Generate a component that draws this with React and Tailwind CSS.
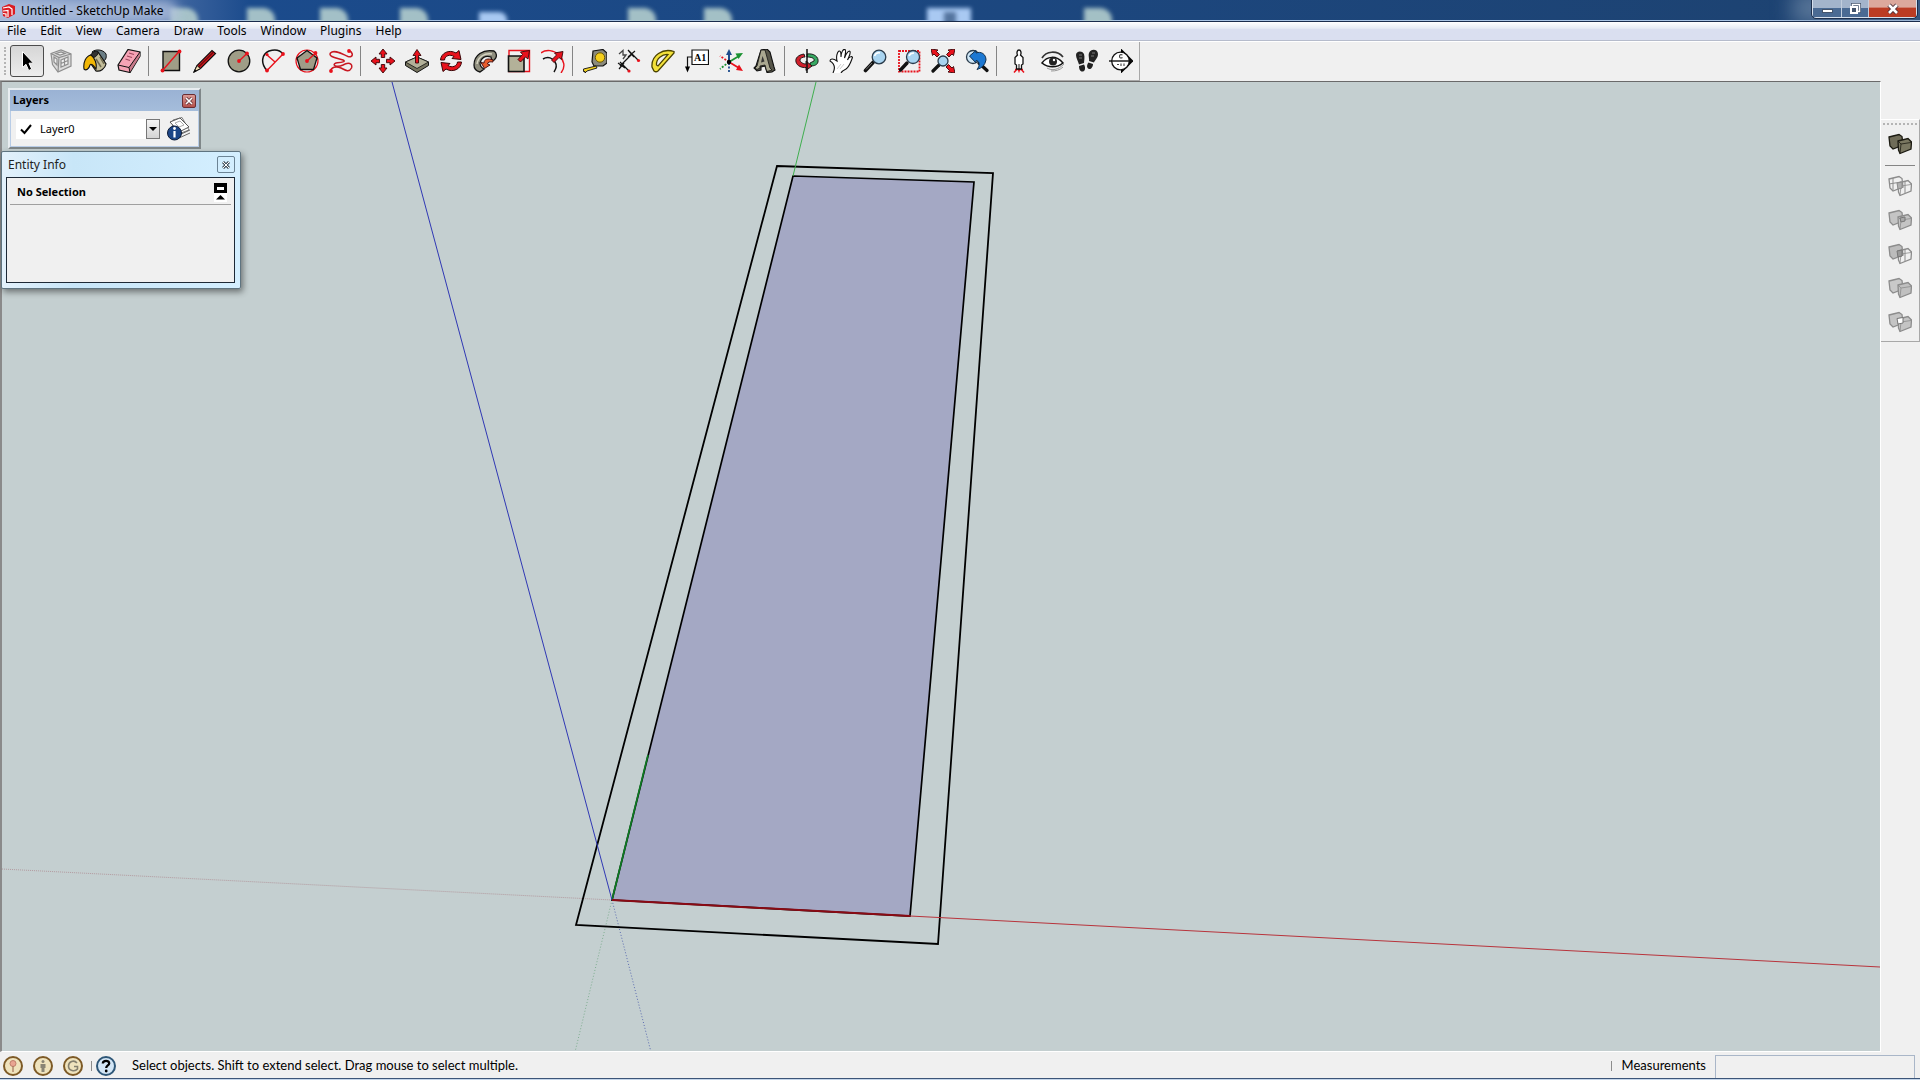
import React, { useState } from 'react';

const INK = '#111111';
const RED = '#e8121c';
const STONE = '#9f9d87';

const Icon = ({ children, className = 'size-6' }) => (
  <svg viewBox="0 0 24 24" className={className} fill="none" aria-hidden="true">
    {children}
  </svg>
);

const SelectIcon = () => (
  <Icon>
    <path d="M7.500 2.500V18.500L11 15.300L13.700 21.500L16.700 20.200L14 14.200H18.500Z" fill="#000" stroke="#fff" strokeWidth="1" />
  </Icon>
);

const ComponentIcon = () => (
  <Icon>
    <path d="M2 4.500L12 1L22 5V17L9 23L3.500 15.500Z" fill="#dcdcdc" stroke="#8e8e8e" strokeWidth="1.200" />
    <path d="M2 4.500L10 8.500L22 5M10 8.500L9 23" stroke="#8e8e8e" strokeWidth="1.200" />
    <path d="M5 8L8 10V16L5 13ZM12 11L19 8V15L12 18ZM7 4.500L12 3L16 4.500L11 6ZM12 14.500L19 11.500M15.500 9.500V16.500" stroke="#8e8e8e" strokeWidth="1.200" fill="#efefef" />
  </Icon>
);

const PaintIcon = () => (
  <Icon>
    <path d="M9 3C12 0 20 0 23 5C24 9 22 12 20 12L12 8Z" fill="#6c7f86" stroke={INK} />
    <path d="M7 7L15 3L23 15C22 20 17 23 13 22L6 12Z" fill="#c3bd9b" stroke={INK} strokeWidth="1.200" />
    <path d="M7 7C9 3 13 1 15 3C16 5 12 9 9 9Z" fill="#333" stroke={INK} />
    <path d="M13 10L18 18M17 8L21 15" stroke="#706b50" strokeWidth="1.500" />
    <path d="M8 6C3 7 0 13 1 20C3 22 6 20 7 16C8 14 10 16 13 20C14 15 12 9 8 6Z" fill="#f2b705" stroke={INK} strokeWidth="1.100" />
  </Icon>
);

const EraserIcon = () => (
  <Icon>
    <path d="M11 0.500L23 3V7L13 23.500L2 21L1 16Z" fill="#f6a3b5" stroke={INK} strokeWidth="1.200" />
    <path d="M12 18.500L23 3V7L13 23Z" fill="#c97a8b" />
    <path d="M1 16L12 18.500L23 3M12 18.500L13 23.500" stroke={INK} strokeWidth="1" />
    <path d="M12 4L17 5.500M10 7L15 8.500M8.500 10L13 11.500" stroke="#a04a60" strokeWidth="1.300" />
  </Icon>
);

const RectangleIcon = () => (
  <Icon>
    <path d="M4 2.500H20.500V21.500H4Z" fill={STONE} stroke={INK} strokeWidth="1.400" />
    <path d="M3.500 21.500L20 2.500" stroke={RED} strokeWidth="1.400" />
    <circle cx="3.500" cy="21.500" r="1.900" fill={RED} />
    <circle cx="20.500" cy="2.500" r="1.900" fill={RED} />
  </Icon>
);

const PencilIcon = () => (
  <Icon>
    <path d="M1 23L4 16.500L19 1.500L22.500 4.500L7.500 19.500Z" fill="#d8141c" stroke={INK} strokeWidth="1.200" />
    <path d="M1 23L4 16.500L7.500 19.500Z" fill="#f3dfb4" stroke={INK} />
    <path d="M5.500 18L20.500 3" stroke="#6c0b0f" strokeWidth="1.200" />
    <path d="M1 23L2 20.500L3.500 22Z" fill="#000" />
  </Icon>
);

const CircleIcon = () => (
  <Icon>
    <circle cx="12" cy="12" r="10.800" fill={STONE} stroke={INK} strokeWidth="1.300" />
    <path d="M12 12L20 4.500" stroke={RED} strokeWidth="1.400" />
    <circle cx="12" cy="12" r="1.900" fill={RED} />
    <circle cx="20" cy="4.500" r="1.900" fill={RED} />
  </Icon>
);

const ArcIcon = () => (
  <Icon>
    <path d="M6 21.500C-1 14 1 5 8 2C14 0 19 1 22 5" stroke={INK} strokeWidth="1.500" />
    <path d="M6 21.500L22 5M6 6L14 13" stroke={RED} strokeWidth="1.400" />
    <circle cx="6" cy="21.500" r="1.900" fill={RED} />
    <circle cx="22" cy="5" r="1.900" fill={RED} />
    <circle cx="6" cy="5.500" r="1.600" fill={RED} />
  </Icon>
);

const PolygonIcon = () => (
  <Icon>
    <circle cx="12" cy="12" r="11" stroke={RED} strokeWidth="1.200" />
    <path d="M12 1.500L22 9L18.500 20.500H5.500L2 9Z" fill={STONE} stroke={INK} strokeWidth="1.300" />
    <path d="M12 12L20 4.500" stroke={RED} strokeWidth="1.400" />
    <circle cx="12" cy="12" r="1.900" fill={RED} />
    <circle cx="20.500" cy="4" r="1.900" fill={RED} />
  </Icon>
);

const FreehandIcon = () => (
  <Icon>
    <path d="M20 1.500C25 4 24 9 19 7.500C13 5 5 0 1.500 4C-1 8 8 9 14 11C18 13 11 13.500 7 14C2 16 8 19 14 16C19 13 24 14 22.500 19C20 24 16 21 12 19C7 17 2 18 1.500 22.500" stroke="#c81822" strokeWidth="1.500" />
    <circle cx="20" cy="2" r="1.900" fill={RED} />
    <circle cx="2" cy="22" r="1.900" fill={RED} />
  </Icon>
);

const MoveIcon = () => (
  <Icon>
    <path d="M12 0L16 5H13.700V8.500H10.300V5H8ZM12 24L16 19H13.700V15.500H10.300V19H8ZM0 12L5 8V10.300H8.500V13.700H5V16ZM24 12L19 8V10.300H15.500V13.700H19V16Z" fill={RED} stroke="#3a0507" strokeWidth="0.900" />
  </Icon>
);

const PushPullIcon = () => (
  <Icon>
    <path d="M0.500 13L12 8L23.500 13V16.500L12 23.500L0.500 16.500Z" fill="#77755f" stroke={INK} />
    <path d="M0.500 13L12 8L23.500 13L12 19.500Z" fill="#b3b199" stroke={INK} strokeWidth="0.800" />
    <path d="M12 0.500L16 6.500H13.500V14H10.500V6.500H8Z" fill={RED} stroke="#3a0507" strokeWidth="0.900" />
  </Icon>
);

const RotateIcon = () => (
  <Icon>
    <path d="M1.500 11C2 4 10 0 17 4L20 1.500L22 10.500L13 9.500L15 7.500C11 5 6 6.500 5.500 11Z" fill={RED} stroke="#3a0507" strokeWidth="1" />
    <path d="M22.500 13C22 20 14 24 7 20L4 22.500L2 13.500L11 14.500L9 16.500C13 19 18 17.500 18.500 13Z" fill={RED} stroke="#3a0507" strokeWidth="1" />
  </Icon>
);

const FollowMeIcon = () => (
  <Icon>
    <path d="M1 16C1 6 10 0 21 2C24 4 24 8 22 10C21 12 18 12 18 8C12 6 8 9 7 14C7 17 9 19 11 20L7 23C3 22 1 19 1 16Z" fill="#8f8e7e" stroke={INK} strokeWidth="1.300" />
    <path d="M4 15C5 8 11 4 19 5" stroke="#d6d4c2" strokeWidth="1.500" />
    <path d="M20 11C15 9 11 10 11 14L8 13.500L11.500 19.500L17 16L14.500 15C14.500 13 17 12.500 20 13Z" fill="#e85c2c" stroke="#3a0507" strokeWidth="0.900" />
  </Icon>
);

const ScaleIcon = () => (
  <Icon>
    <path d="M2 1.500H22.500V22.500H2Z" stroke={RED} strokeWidth="1.400" />
    <path d="M1.500 7H17V22.500H1.500Z" fill="#b3b199" stroke={INK} strokeWidth="1.600" />
    <path d="M22.500 1.500L21 10L18.500 8L13.500 13L11 10.500L15.500 5.500L13.500 3Z" fill={RED} stroke="#3a0507" strokeWidth="0.900" />
  </Icon>
);

const OffsetIcon = () => (
  <Icon>
    <path d="M0 4C5 0 13 1 18 6C23 11 25 18 20 24" stroke={RED} strokeWidth="1.400" />
    <path d="M2 10C7 7 12 9 14 13C16 16 15 20 13 23" stroke={INK} strokeWidth="1.500" />
    <path d="M22 2.500L20.500 10.500L18 8.500L13 13.500L10.500 11L15.500 6L13.500 4Z" fill={RED} stroke="#3a0507" strokeWidth="0.900" />
  </Icon>
);

const TapeIcon = () => (
  <Icon>
    <path d="M10 2L20 0.500L24 4V14L20 17H11L9 13Z" fill="#8b8a7c" stroke={INK} strokeWidth="1.200" />
    <circle cx="17" cy="8.500" r="4.700" fill="#f6cf1c" stroke="#6d5a00" />
    <path d="M13 17L0.500 20V22.500H2V24L4 22L14 19Z" fill="#f4d21f" stroke={INK} strokeWidth="0.900" />
  </Icon>
);

const DimensionIcon = () => (
  <Icon>
    <path d="M3 17L15 5M1 14L8 19M11 1L17 8M3 13L12 22M12 2L21 11M2 20L7 14M11 8L18 2" stroke={INK} strokeWidth="1.200" />
    <path d="M2 5L6 1.500L6 6L9 6L6 10" stroke="#444" strokeWidth="1.300" />
    <circle cx="21.500" cy="11.500" r="1.600" fill={RED} />
    <circle cx="12" cy="22" r="1.600" fill={RED} />
  </Icon>
);

const ProtractorIcon = () => (
  <Icon>
    <path d="M23 2.500C12 -1 0 6 1 18L3 22Q5 23.500 7 22L23 4Z" fill="#f3e13a" stroke="#4a4200" strokeWidth="1.300" />
    <path d="M17 5.500C11 5 5 10 5.500 16L7 17Z" fill="#f0f0f0" stroke="#4a4200" strokeWidth="1.200" />
  </Icon>
);

const TextIcon = () => (
  <Icon>
    <path d="M7 1H23.500V15.500H7Z" fill="#fff" stroke={INK} strokeWidth="1.200" />
    <path d="M7 8H2.500V18" stroke={INK} strokeWidth="1.200" />
    <path d="M0 17.500H5L2.500 23.500Z" fill="#000" />
    <text x="15.200" y="12" textAnchor="middle" fontSize="10" fontWeight="700" fontFamily="'Liberation Serif', serif" fill="#000">A1</text>
  </Icon>
);

const AxesIcon = () => (
  <Icon>
    <path d="M10 13V5" stroke="#1e4c8c" strokeWidth="2" />
    <path d="M10 0L13 6H7Z" fill="#1e4c8c" />
    <path d="M10 13L20 7" stroke="#1a9130" strokeWidth="1.800" />
    <path d="M24 4L16.500 4.500L19.500 10Z" fill="#1a9130" />
    <path d="M10 13L20 19" stroke={RED} strokeWidth="1.800" />
    <path d="M24 22L17 21L20 15.500Z" fill={RED} />
    <path d="M10 14V24" stroke="#1e4c8c" strokeWidth="1.800" strokeDasharray="2 1.500" />
    <path d="M10 13L1 20" stroke="#1a9130" strokeWidth="1.800" strokeDasharray="2 1.500" />
    <path d="M10 13L1 7" stroke={RED} strokeWidth="1.800" strokeDasharray="2 1.500" />
    <circle cx="10" cy="13" r="2.200" fill="#000" />
  </Icon>
);

const SolidTextIcon = () => (
  <Icon>
    <path d="M8 1L14 0L17 3L21 18L22 21L19 23L14 23.500L12 17L8 18L8 21L4 22L1 19L3 17Z" fill="#57564a" stroke={INK} strokeWidth="1.100" />
    <path d="M8 1L12 1L17 19L19 21L14 22.500L13 20L12 16L7 17L7 19L4 20.500L2 19L4 17Z" fill="#aaa891" stroke={INK} strokeWidth="0.800" />
    <path d="M9.500 7L11.500 12.500L8 13.500Z" fill="#333" />
  </Icon>
);

const OrbitIcon = () => (
  <Icon>
    <path d="M12 5C19 4 24 8 23 13C22 17 17 17 15 17L15 14L19 12C20 9 16 8 12 8Z" fill="#37a862" stroke={INK} strokeWidth="0.900" />
    <path d="M9 5C3 6 0 9 1 13C2 17 7 19 11 18.500V21.500L17 17L11 12V15C8 15 5 13 5 11C5 9 8 8 10 8Z" fill="#cf1f2b" stroke={INK} strokeWidth="0.900" />
    <path d="M12 0V24" stroke={INK} strokeWidth="1.500" />
  </Icon>
);

const PanIcon = () => (
  <Icon>
    <path d="M4 24C6 20 6 15 1 12C1 9.500 4 9 8 12C7 8 8 3 10 2C12 1.500 12 5 12 8C12 4 14 -0.500 16 0.500C17.500 2 16 6 15.500 9C17 4 20 1 21 2.500C22 5 19.500 8 18.500 11C20 8 23 6.500 23.500 8.500C22 12 21 17 17 20C15 21 13 22 12 24" fill="#fff" stroke={INK} strokeWidth="1.100" />
    <path d="M8 20L12 15M11 20L15 15" stroke="#ccc" />
  </Icon>
);

const Lens = ({ x, y, r }) => (
  <circle cx={x} cy={y} r={r} fill="#a9d4f0" stroke="#2b3c4c" strokeWidth="1.300" />
);

const ZoomIcon = () => (
  <Icon>
    <path d="M2.500 21.500L10 13.500" stroke={INK} strokeWidth="3.600" strokeLinecap="round" />
    <path d="M3 20.500L9 14" stroke="#777" strokeWidth="1" />
    <Lens x={16} y={8} r={6.8} />
    <path d="M11.500 7C12.500 4.500 15 3.500 17 4" stroke="#fff" strokeWidth="1.500" />
  </Icon>
);

const ZoomWindowIcon = () => (
  <Icon>
    <path d="M2 2H22.500V22.500H2Z" stroke={RED} strokeWidth="1.800" strokeDasharray="2 1" />
    <path d="M3.500 21L10 14" stroke={INK} strokeWidth="3.400" strokeLinecap="round" />
    <Lens x={16} y={8} r={6.5} />
    <path d="M12 7C13 4.500 15 4 17 4" stroke="#fff" strokeWidth="1.500" />
  </Icon>
);

const ZoomExtentsIcon = () => (
  <Icon>
    <path d="M0 0L7 1L5.500 2.500L8.500 5.500L6 8L3 5L1.500 6.500ZM24 0L17 1L18.500 2.500L15.500 5.500L18 8L21 5L22.500 6.500ZM24 24L17 23L18.500 21.500L15 18L17.500 15.500L21 19L22.500 17.500Z" fill={RED} stroke="#3a0507" strokeWidth="0.900" />
    <path d="M2 22L8 16" stroke={INK} strokeWidth="3.200" strokeLinecap="round" />
    <Lens x={12} y={12} r={5} />
  </Icon>
);

const PreviousIcon = () => (
  <Icon>
    <path d="M14 14L22 21.500" stroke={INK} strokeWidth="3.200" strokeLinecap="round" />
    <circle cx="8" cy="8" r="6.500" fill="#cfe6f5" stroke="#2b3c4c" strokeWidth="1.300" />
    <path d="M4.500 7L11 1.500V4C16 2 21 5 21 11C20 16 17 19 12 20.500C15 17 15 12 11 11.500V14Z" fill="#1d78d2" stroke="#12304f" strokeWidth="1" />
  </Icon>
);

const PositionCameraIcon = () => (
  <Icon>
    <path d="M7 23.500L11 19L12 22L13 19L17 23.500M8 20.500H16" stroke={RED} strokeWidth="1.500" />
    <path d="M12 1C14 1 14.500 4 13.500 6L16 8.500V15L14.500 16V20H9.500V16L8 15V8.500L10.500 6C9.500 4 10 1 12 1Z" fill="#fff" stroke={INK} strokeWidth="1.300" />
    <path d="M12 15V20" stroke={INK} />
  </Icon>
);

const LookAroundIcon = () => (
  <Icon>
    <path d="M1 9C5 2 16 1 22 8" stroke="#333" strokeWidth="1.700" />
    <path d="M1 14C6 7 15 6 22 14C16 19 7 19 1 14Z" fill="#fff" stroke={INK} strokeWidth="1.500" />
    <circle cx="12" cy="12.500" r="4" fill="#222" />
    <circle cx="13" cy="11" r="1.200" fill="#fff" />
    <path d="M6 19C11 22 17 21 23 15M10 22C15 22 19 21 22 18" stroke="#999" />
  </Icon>
);

const WalkIcon = () => (
  <Icon>
    <path d="M1 6C1 2 7 1 9 5C10 8 9 12 9 14L4 15.500C3 12 1 9 1 6ZM4 17L9 15.500C11 19 10 22 8 22.500C5 23 4 20 4 17Z" fill="#222" />
    <path d="M14 4C16 -1 23 0 23 5C23 9 20 11 19 13.500L14 12C14.500 9 13 7 14 4ZM13.500 13.500L18 15C18 18 16 20.500 14 20C11 19 12 15.500 13.500 13.500Z" fill="#222" />
    <path d="M4 6L7 6M4 9H7M17 4H20M16 7H19" stroke="#777" />
  </Icon>
);

const SectionIcon = () => (
  <Icon>
    <path d="M12 -0.500L24.500 12L12 24.500Z" fill="#000" />
    <circle cx="11.500" cy="12" r="8.800" fill="#fff" stroke={INK} strokeWidth="1.300" />
    <path d="M0 12H24" stroke={INK} strokeWidth="1.400" />
    <path d="M13.500 6C11.500 5 10.500 6 10.500 7.500C10.500 9 12 9.500 13.500 8.500M8 15.500H10M12 14.500V17M15 14.500V17" stroke="#444" strokeWidth="1.100" />
  </Icon>
);

const toolGroups = [
  [
    ['Select', SelectIcon],
    ['Make Component', ComponentIcon],
    ['Paint Bucket', PaintIcon],
    ['Eraser', EraserIcon],
  ],
  [
    ['Rectangle', RectangleIcon],
    ['Line', PencilIcon],
    ['Circle', CircleIcon],
    ['Arc', ArcIcon],
    ['Polygon', PolygonIcon],
    ['Freehand', FreehandIcon],
  ],
  [
    ['Move', MoveIcon],
    ['Push/Pull', PushPullIcon],
    ['Rotate', RotateIcon],
    ['Follow Me', FollowMeIcon],
    ['Scale', ScaleIcon],
    ['Offset', OffsetIcon],
  ],
  [
    ['Tape Measure', TapeIcon],
    ['Dimension', DimensionIcon],
    ['Protractor', ProtractorIcon],
    ['Text', TextIcon],
    ['Axes', AxesIcon],
    ['3D Text', SolidTextIcon],
  ],
  [
    ['Orbit', OrbitIcon],
    ['Pan', PanIcon],
    ['Zoom', ZoomIcon],
    ['Zoom Window', ZoomWindowIcon],
    ['Zoom Extents', ZoomExtentsIcon],
    ['Previous', PreviousIcon],
  ],
  [
    ['Position Camera', PositionCameraIcon],
    ['Look Around', LookAroundIcon],
    ['Walk', WalkIcon],
    ['Section Plane', SectionIcon],
  ],
];

const menus = ['File', 'Edit', 'View', 'Camera', 'Draw', 'Tools', 'Window', 'Plugins', 'Help'];

// Two overlapping boxes, the shared shape of every solid tool
const BACK = 'M1 4L11 1.500L14 3.500L15 12L5 16L2 13Z';
const FRONT = 'M10 8L20 5.500L23.500 9L23 16L12 20.500L10.500 17Z';

const SolidIcon = ({ back, front, stroke = '#8c8c8c', children }) => (
  <Icon>
    <path d={BACK} fill={back} stroke={stroke} strokeWidth="1.300" />
    <path d={FRONT} fill={front} stroke={stroke} strokeWidth="1.300" />
    <path d="M10 8L13 11L23 9.500M13 11L12 20.500" stroke={stroke} strokeWidth="0.800" />
    {children}
  </Icon>
);

const solidTools = [
  ['Intersect', <SolidIcon back="none" front="none"><path d="M1 9L13 7M5 3V15M17 6V18" stroke="#8c8c8c" /><path d="M9 8L14 7V13L10 14Z" fill="#b0b0b0" stroke="#8c8c8c" /></SolidIcon>],
  ['Union', <SolidIcon back="#c4c4c4" front="#c4c4c4"><path d="M12 9L17 8V12L13 13Z" fill="#a8a8a8" stroke="#777" /></SolidIcon>],
  ['Subtract', <SolidIcon back="#bcbcbc" front="none"><path d="M9 8L14 7V13L10 14Z" fill="#999" stroke="#777" /><path d="M17 6V18" stroke="#8c8c8c" /></SolidIcon>],
  ['Trim', <SolidIcon back="#c9c9c9" front="#c0c0c0" />],
  ['Split', <SolidIcon back="#c4c4c4" front="#c4c4c4"><path d="M9 7.500L15 6.500V12L10 13Z" fill="#fff" stroke="#777" /></SolidIcon>],
];

const TitleBar = () => (
  <header className="relative flex h-[22px] items-start justify-between overflow-hidden border-b border-[#1a2c4c] bg-linear-to-r from-[#8fa6cf] from-0% via-[#1b4b8c] via-13% to-[#1d4270] shadow-[inset_0_-1px_0_#a9c4e4]">
    <div className="absolute inset-0 flex overflow-hidden">
      {[170, 247, 320, 400, 628, 704, 1084].map((left) => (
        <span key={left} className="absolute top-2 h-5 w-7 rounded-tr-xl bg-[#b3cdcd]/90 blur-[2px]" style={{ left }} />
      ))}
      <span className="absolute top-3 left-[479px] h-4 w-7 rounded-tr-lg bg-[#a9c9f2] blur-[2px]" />
      <span className="absolute top-2 left-[927px] h-5 w-11 bg-[#a9c9f2] blur-[2px]" />
      <span className="absolute top-3 left-[944px] h-4 w-3 bg-[#54749e] blur-[2px]" />
      <span className="absolute top-0 -left-3 h-6 w-[190px] rounded-full bg-[#b4c3e0]/80 blur-[6px]" />
      <span className="absolute -top-2 right-0 h-8 w-32 bg-[#8197b3]/60 blur-[10px]" />
    </div>
    <div className="relative flex h-[22px] items-center gap-1 pl-px">
      <svg viewBox="0 0 16 16" className="size-4" aria-hidden="true">
        <path d="M1 4L8 1L14 3V11L7 15L2 13Z" fill="#dc1c22" />
        <path d="M2 5L8 4L11 6V12M2 8L7 7.500V14M2 10.500L5 11V14" stroke="#fff" strokeWidth="1.200" fill="none" />
      </svg>
      <h1 className="text-[12px] whitespace-nowrap">Untitled - SketchUp Make</h1>
    </div>
    <div className="relative mr-[3px] flex h-[18px] rounded-b-sm border border-t-0 border-[#d5dfec] outline outline-[#1d2f4d]">
      <button aria-label="Minimize" className="flex w-[29px] items-end justify-center border-r border-[#c2cede] bg-linear-to-b from-[#a3b4cb] from-45% to-[#4a6a93] to-50% pb-1">
        <span className="h-1 w-[11px] border border-[#44546c] bg-white" />
      </button>
      <button aria-label="Restore" className="flex w-[27px] items-center justify-center border-r border-[#c2cede] bg-linear-to-b from-[#a3b4cb] from-45% to-[#4a6a93] to-50%">
        <svg viewBox="0 0 12 12" className="size-3" fill="none" aria-hidden="true">
          <path d="M3.500 1.500H10.500V8.500H3.500Z" stroke="#44546c" strokeWidth="3" />
          <path d="M3.500 1.500H10.500V8.500H3.500Z" stroke="#fff" strokeWidth="1.500" />
          <path d="M2 4H8V10H2Z" fill="#44546c" stroke="#fff" strokeWidth="2" />
        </svg>
      </button>
      <button aria-label="Close" className="flex w-[47px] items-center justify-center bg-linear-to-b from-[#dca89c] from-40% to-[#bb3c24] to-50%">
        <svg viewBox="0 0 12 12" className="size-3" aria-hidden="true">
          <path d="M2 2L10 10M10 2L2 10" stroke="#4c3038" strokeWidth="4.500" />
          <path d="M2 2L10 10M10 2L2 10" stroke="#fff" strokeWidth="2.600" />
        </svg>
      </button>
    </div>
  </header>
);

const MenuBar = () => (
  <nav className="flex h-[19px] items-center gap-[14px] border-b border-[#b6bccc] bg-linear-to-b from-white from-0% via-[#e6ebf4] via-35% to-[#dadff0] to-40% pl-[7px] text-[12px]">
    {menus.map((menu) => (
      <button key={menu} className="leading-4">{menu}</button>
    ))}
  </nav>
);

const Toolbar = ({ tool, onPick }) => (
  <div className="flex h-10 border-t border-white">
    <div role="toolbar" aria-label="Large Tool Set" className="flex items-center border-r border-b border-[#a8a8a8] pr-px pl-1">
      <span className="mr-1 h-7 w-0 border-l-2 border-dotted border-[#b4b4b4]" />
      {toolGroups.map((group, i) => (
        <React.Fragment key={i}>
          {i > 0 && <span className="mr-[5px] ml-0.5 h-[30px] w-px bg-[#858585]" />}
          {group.map(([name, ToolIcon]) => (
            <button
              key={name}
              title={name}
              aria-label={name}
              onClick={() => onPick(name)}
              className={`flex h-8 w-[34px] items-center justify-center rounded-[3px] border ${
                tool === name ? 'border-[#4c4c4c] bg-linear-to-b from-[#d6d6d6] to-[#ededed]' : 'border-transparent'
              }`}
            >
              <ToolIcon />
            </button>
          ))}
        </React.Fragment>
      ))}
    </div>
  </div>
);

const LayersPanel = () => (
  <section className="absolute top-1.5 left-1.5 w-[193px] border-2 border-t-[#e8edf0] border-r-[#7f8789] border-b-[#7f8789] border-l-[#e8edf0] bg-[#f0f0f0]">
    <div className="flex h-[21px] items-center justify-between bg-linear-to-b from-[#9ab2d4] to-[#a5bddb] pr-[3px] pl-[3px]">
      <h2 className="text-[11px] font-bold">Layers</h2>
      <button aria-label="Close Layers" className="flex size-3.5 items-center justify-center rounded-xs border border-[#6b2d33] bg-linear-to-b from-[#d99a96] to-[#b4504c]">
        <svg viewBox="0 0 8 8" className="size-2" aria-hidden="true">
          <path d="M1 1L7 7M7 1L1 7" stroke="#5b2a32" strokeWidth="3" />
          <path d="M1 1L7 7M7 1L1 7" stroke="#fff" strokeWidth="1.600" />
        </svg>
      </button>
    </div>
    <div className="flex h-9 items-center border-x border-b border-[#b8cce6] pl-[5px]">
      <div className="relative flex h-5 w-36">
        <select aria-label="Active layer" className="h-5 w-full appearance-none bg-white pl-6 text-[11px] leading-5">
          <option>Layer0</option>
        </select>
        <svg viewBox="0 0 12 12" className="pointer-events-none absolute top-1 left-1 size-3" fill="none" aria-hidden="true">
          <path d="M1 6.500L4.500 10L11 2" stroke="#000" strokeWidth="2" />
        </svg>
        <span className="pointer-events-none absolute inset-y-0 right-0 flex w-3.5 items-center justify-center border border-[#777] bg-linear-to-b from-[#f4f4f4] to-[#d4d4d4]">
          <svg viewBox="0 0 8 4" className="h-1 w-2" aria-hidden="true"><path d="M0 0H8L4 4Z" fill="#000" /></svg>
        </span>
      </div>
      <button aria-label="Layer Manager" className="ml-[7px] flex">
        <Icon>
          <path d="M6 3L15 0.500L22 13L14 16L5 14Z" fill="#fff" stroke="#777" />
          <path d="M3 5L13 1L22 10L12 15Z" fill="#fff" stroke="#555" />
          <path d="M8 6L13 4L17 8L12 10Z" stroke="#aaa" />
          <path d="M12 18L23 13M12 21L23 16" stroke="#666" />
          <circle cx="7.500" cy="16" r="7" fill="#1c4687" stroke="#0d1c38" />
          <path d="M7.500 14V20.500" stroke="#fff" strokeWidth="2.200" />
          <circle cx="7.500" cy="11.500" r="1.400" fill="#fff" />
        </Icon>
      </button>
    </div>
  </section>
);

const EntityInfoPanel = () => (
  <section className="absolute top-[69px] -left-px w-60 rounded-xs border border-[#5f7480] bg-linear-to-r from-[#e3f1fb] via-[#c8e6f8] via-30% to-[#d4efff] px-1 pr-[5px] pb-[5px] shadow-[2px_3px_6px_rgba(0,0,0,0.45)]">
    <div className="flex h-[25px] items-center justify-between pl-0.5">
      <h2 className="text-[12px] text-[#222]">Entity Info</h2>
      <button aria-label="Close Entity Info" className="flex h-[17px] w-[18px] items-center justify-center rounded-xs border border-[#6c8495]">
        <svg viewBox="0 0 8 8" className="size-2" aria-hidden="true">
          <path d="M1 1L7 7M7 1L1 7" stroke="#46535f" strokeWidth="3" />
          <path d="M1 1L7 7M7 1L1 7" stroke="#fff" strokeWidth="1" />
        </svg>
      </button>
    </div>
    <div className="h-[106px] border border-[#1d2936] bg-[#f0f0f0] px-[3px]">
      <div className="flex h-[27px] items-center justify-between border-b border-[#a0a0a0] pt-0.5 pr-1 pl-[7px]">
        <p className="text-[11px] font-bold">No Selection</p>
        <button aria-label="Toggle details" className="flex">
          <svg viewBox="0 0 13 19" className="h-[19px] w-[13px]" aria-hidden="true">
            <path d="M0 0H13V19H0Z" fill="#fff" />
            <path d="M0 0H13V10H0Z" fill="#000" />
            <path d="M3 4H10V7H3Z" fill="#fff" />
            <path d="M2 16.500L6.500 12L11 16.500Z" fill="#000" />
          </svg>
        </button>
      </div>
    </div>
  </section>
);

const Scene = () => (
  <svg viewBox="2 82 1878 969" preserveAspectRatio="xMinYMin slice" className="absolute inset-0 size-full" fill="none" aria-label="Model">
    <path d="M2 869L612 900" stroke="#b39a9f" strokeDasharray="1 1" />
    <path d="M612 900L575 1052" stroke="#7fae90" strokeDasharray="1 2" />
    <path d="M612 900L651 1052" stroke="#5b6cb0" strokeDasharray="1 2" />
    <path d="M793 176L974 182L910 916L612 900Z" fill="#a4a8c4" stroke="#000" strokeWidth="1.700" />
    <path d="M777 166L993 173L938 944L576 925Z" stroke="#000" strokeWidth="1.800" />
    <path d="M816 82L793 176" stroke="#3fae4e" />
    <path d="M648 755L612 900" stroke="#0d7a22" strokeWidth="1.700" />
    <path d="M392 82L612 900" stroke="#3038b4" />
    <path d="M612 900L910 916" stroke="#8a0a14" strokeWidth="2" />
    <path d="M910 916L1880 967" stroke="#b8343c" />
  </svg>
);

const SolidToolbar = () => (
  <aside className="w-[39px] shrink-0 pt-[38px]">
    <div role="toolbar" aria-label="Solid Tools" className="flex flex-col items-center border-t border-r border-b border-t-white border-r-[#a8a8a8] border-b-[#a8a8a8] pt-[3px] pb-px">
      <span className="mb-[3px] h-0 w-[34px] border-t-2 border-dotted border-[#b4b4b4]" />
      <button aria-label="Outer Shell" className="flex h-[34px] items-center">
        <SolidIcon back="#6f6c58" front="#7a7761" stroke="#1c1b12" />
      </button>
      <span className="my-[3px] h-0.5 w-[30px] border-t border-[#858585]" />
      {solidTools.map(([name, icon]) => (
        <button key={name} aria-label={name} className="flex h-[34px] items-center">{icon}</button>
      ))}
    </div>
  </aside>
);

const Coin = ({ label, children }) => (
  <button aria-label={label} className="flex size-5">
    <svg viewBox="0 0 20 20" className="size-5" fill="none" aria-hidden="true">
      <circle cx="10" cy="10" r="9" fill="#efe3bd" stroke="#7d5a26" strokeWidth="2" />
      {children}
    </svg>
  </button>
);

const StatusBar = () => (
  <footer className="flex h-[26px] items-center pt-0.5 font-[Lato,sans-serif] text-[13px]">
    <div className="flex items-center gap-2.5 pl-[3px]">
      <Coin label="Geo-location">
        <circle cx="10" cy="7.500" r="3" fill="#e9a592" stroke="#c07f6c" />
        <path d="M10 10V16" stroke="#a87b60" strokeWidth="1.300" />
      </Coin>
      <Coin label="Credits">
        <circle cx="10" cy="5.500" r="1.500" fill="#8a8575" />
        <path d="M7.500 8H12.500V12H11.500V16H8.500V12H7.500Z" fill="#8a8575" />
      </Coin>
      <Coin label="Sign in">
        <path d="M14 7C11 3.500 5.500 5.500 5.500 10C5.500 15 12 16 14.500 13V10.500H11" stroke="#85806e" strokeWidth="1.600" />
      </Coin>
    </div>
    <span className="mr-1 ml-2 h-2.5 w-px bg-[#8c8c8c]" />
    <button aria-label="Help" className="flex size-5">
      <svg viewBox="0 0 20 20" className="size-5" fill="none" aria-hidden="true">
        <circle cx="10" cy="10" r="9" fill="#d3e6f6" stroke="#2f5778" strokeWidth="2" />
        <path d="M6.800 7.500C7 4 13.300 4 13.200 7.500C13 9.500 10.200 9.500 10.200 12" stroke="#000" strokeWidth="2.300" />
        <circle cx="10.200" cy="15" r="1.400" fill="#000" />
      </svg>
    </button>
    <p className="ml-4 flex-1">Select objects. Shift to extend select. Drag mouse to select multiple.</p>
    <span className="mr-2.5 h-2.5 w-px bg-[#8c8c8c]" />
    <label htmlFor="measurements" className="mr-[9px]">Measurements</label>
    <input id="measurements" className="mr-[5px] h-[23px] w-[200px] self-end border border-b-0 border-[#a9b6c8] bg-[#f0f0f0] px-1" />
  </footer>
);

const App = () => {
  const [tool, setTool] = useState('Select');

  return (
    <div className="flex min-h-screen flex-col overflow-hidden bg-[#f0f0f0] font-['Noto_Sans',sans-serif] text-black">
      <TitleBar />
      <MenuBar />
      <Toolbar tool={tool} onPick={setTool} />
      <div className="flex flex-1">
        <main className="relative flex-1 border-t border-r border-b border-l-2 border-t-[#6a6a6a] border-r-white border-b-white border-l-[#8a8a8a] bg-[#c4cfd0]">
          <Scene />
          <LayersPanel />
          <EntityInfoPanel />
        </main>
        <SolidToolbar />
      </div>
      <StatusBar />
      <div className="h-0.5 border-t border-[#3c5578] bg-[#c5d6ea]" />
    </div>
  );
};

export default App;
